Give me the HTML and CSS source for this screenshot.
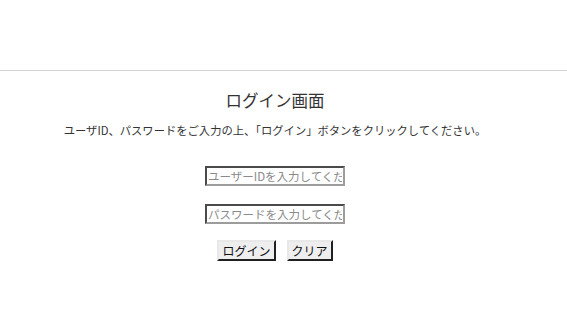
FILE: index.html
```html
<!DOCTYPE html>
<html lang="ja">
<head>
<meta charset="utf-8">
<title>ログイン画面</title>
<link rel="stylesheet" href="styles.css">
</head>
<body>
<header class="topbar"></header>
<main class="content">
  <h1 class="title">ログイン画面</h1>
  <p class="lead">ユーザID、パスワードをご入力の上、「ログイン」ボタンをクリックしてください。</p>
  <form class="login-form">
    <div class="field"><input class="text-input" type="text" placeholder="ユーザーIDを入力してください"></div>
    <div class="field"><input class="text-input" type="password" placeholder="パスワードを入力してください"></div>
    <div class="actions">
      <button class="btn" type="button">ログイン</button>
      <button class="btn" type="reset">クリア</button>
    </div>
  </form>
</main>
</body>
</html>
```
FILE: styles.css
```css
html, body {
  margin: 0;
  padding: 0;
  background: #ffffff;
}
body {
  font-family: "Noto Sans CJK JP", "Noto Sans", sans-serif;
  color: #333333;
}
.topbar {
  height: 70px;
  border-bottom: 1px solid #d4d4d4;
}
.content {
  padding-right: 17px;
  text-align: center;
}
.title {
  margin: 19px 0 0;
  font-size: 16.5px;
  line-height: 20px;
  font-weight: normal;
  color: #333333;
}
.lead {
  margin: 12px 0 0;
  font-size: 11.3px;
  line-height: 16px;
  color: #333333;
}
.login-form {
  margin-top: 28px;
  display: flex;
  flex-direction: column;
  align-items: center;
}
.field {
  display: flex;
}
.field + .field {
  margin-top: 18px;
}
.text-input {
  display: block;
  box-sizing: border-box;
  width: 140px;
  height: 20px;
  margin: 0;
  padding: 0 1px;
  border: 2px solid;
  border-color: #4a4a4a #9c9c9c #9c9c9c #4a4a4a;
  font-family: "Noto Sans CJK JP", sans-serif;
  font-size: 11.5px;
  color: #333;
  background: #fff;
  outline: none;
}
.text-input::placeholder {
  color: #8a8a8a;
}
.actions {
  margin-top: 16px;
  display: flex;
  gap: 11px;
}
.btn {
  display: block;
  box-sizing: border-box;
  height: 21px;
  margin: 0;
  padding: 0 3px;
  border: 2px solid;
  border-color: #e8e8e8 #202020 #202020 #e8e8e8;
  background: #eeeeee;
  font-family: "Noto Sans CJK JP", sans-serif;
  font-size: 12px;
  line-height: 15px;
  color: #111;
}
```
